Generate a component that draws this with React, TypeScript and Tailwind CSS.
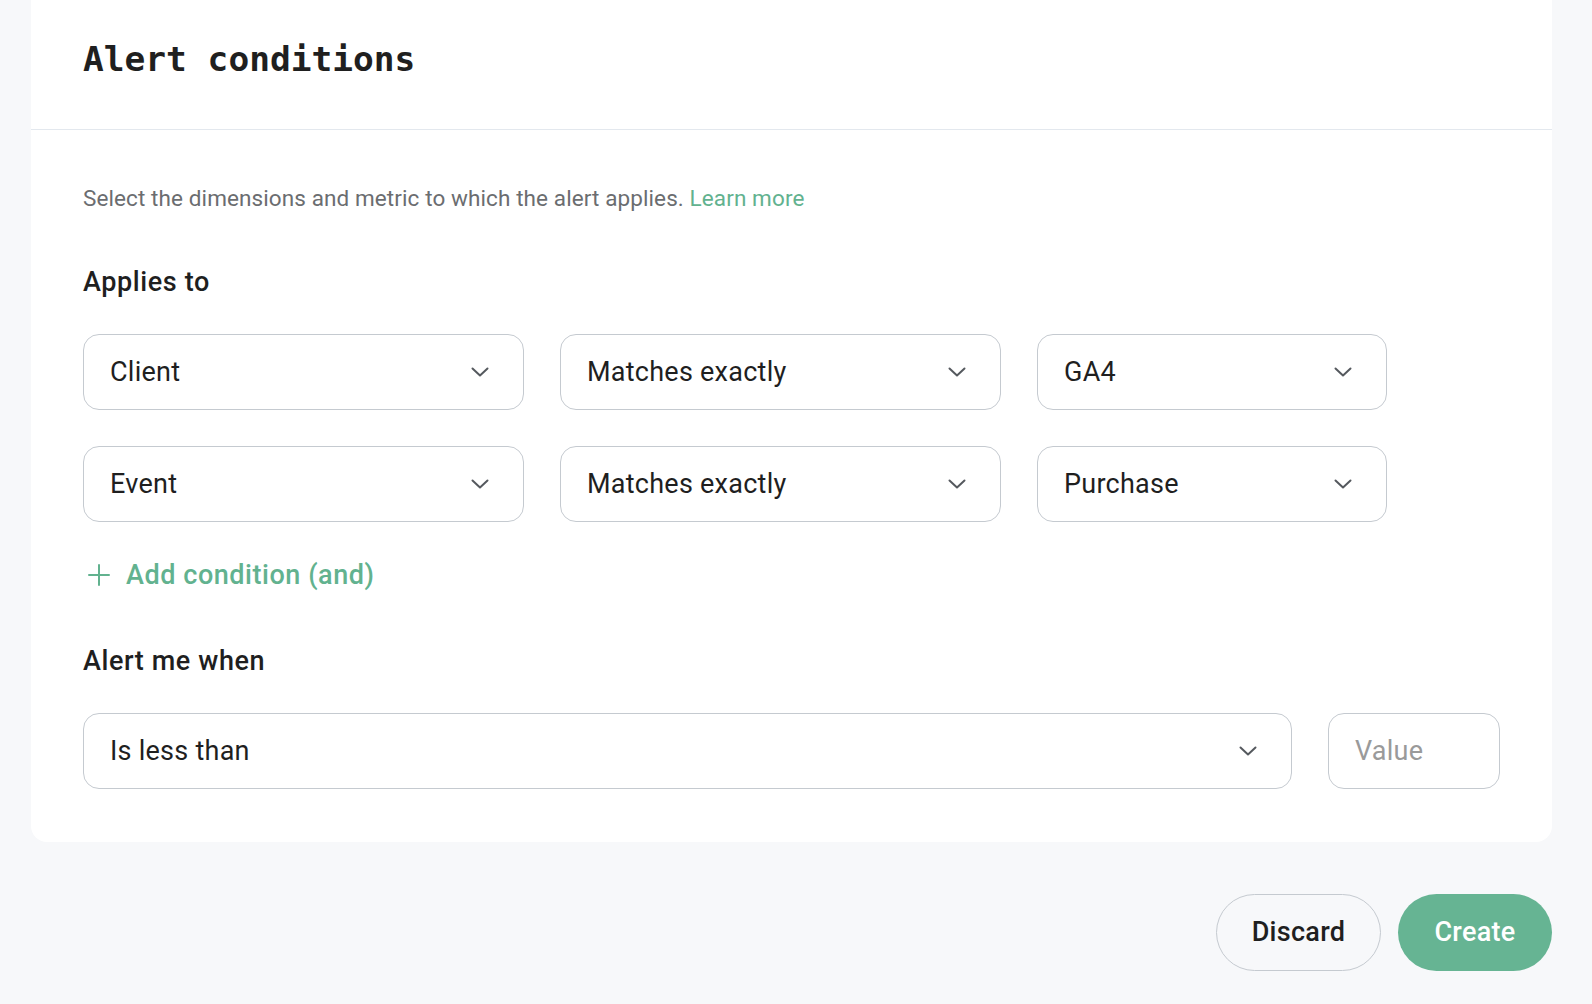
import { useState } from "react"

interface SelectBoxProps {
  value: string
  className?: string
}

// chevron used by every dropdown
function Chevron() {
  return (
    <svg width="18" height="10" viewBox="0 0 18 10" fill="none" className="shrink-0">
      <polyline points="1.5,1.5 9,8.5 16.5,1.5" stroke="#55595e" strokeWidth="2" strokeLinecap="round" strokeLinejoin="round" />
    </svg>
  )
}

function SelectBox({ value, className = "" }: SelectBoxProps) {
  return (
    <button
      type="button"
      className={`h-[76px] flex items-center justify-between pl-[26px] pr-[34px] bg-white border-[1.5px] border-[#c5cad0] rounded-[16px] text-[27px] tracking-[0.25px] text-[#1f1f1f] text-left ${className}`}
    >
      <span>{value}</span>
      <Chevron />
    </button>
  )
}

export default function App() {
  const [amount, setAmount] = useState("")

  const conditions = [
    { field: "Client", op: "Matches exactly", value: "GA4" },
    { field: "Event", op: "Matches exactly", value: "Purchase" }
  ]

  return (
    <div
      className="min-h-screen w-full bg-[#f7f8fa] pl-[31px] pr-[40px]"
      style={{ fontFamily: "Roboto, 'Noto Sans', sans-serif" }}
    >
      {/* Card */}
      <div className="bg-white rounded-b-[16px]">
        <div className="h-[130px] border-b-[1.5px] border-[#e3e8ee] px-[52px] pt-[40px]">
          <h1
            className="text-[34.5px] leading-[38px] font-bold text-[#1f1f1f]"
            style={{ fontFamily: "'DejaVu Sans Mono', 'Liberation Mono', monospace" }}
          >
            Alert conditions
          </h1>
        </div>

        <div className="px-[52px] pt-[54px] pb-[53px]">
          <p className="text-[22.5px] leading-[28px] tracking-[0.1px] text-[#6b6d70]">
            Select the dimensions and metric to which the alert applies.{" "}
            <a className="text-[#62b28f]">Learn more</a>
          </p>

          <h2 className="mt-[54px] text-[27px] leading-[32px] font-medium tracking-[0.6px] text-[#1f1f1f]">Applies to</h2>

          <div className="mt-[36px] flex flex-col gap-[36px]">
            {conditions.map((c) => (
              <div key={c.field} className="flex gap-[36px]">
                <SelectBox value={c.field} className="w-[441px]" />
                <SelectBox value={c.op} className="w-[441px]" />
                <SelectBox value={c.value} className="w-[350px]" />
              </div>
            ))}
          </div>

          <button type="button" className="mt-[37px] flex items-center gap-[16px] pl-[5px] text-[27px] leading-[32px] font-medium tracking-[0.55px] text-[#62b28f]">
            <svg width="22" height="22" viewBox="0 0 22 22" fill="none">
              <path d="M11 1v20M1 11h20" stroke="#62b28f" strokeWidth="2" strokeLinecap="round" />
            </svg>
            Add condition (and)
          </button>

          <h2 className="mt-[54px] text-[27px] leading-[32px] font-medium tracking-[0.6px] text-[#1f1f1f]">Alert me when</h2>

          <div className="mt-[36px] flex gap-[36px]">
            <SelectBox value="Is less than" className="flex-1" />
            <input
              value={amount}
              onChange={(e) => setAmount(e.target.value)}
              placeholder="Value"
              className="w-[172px] h-[76px] px-[26px] border-[1.5px] border-[#c5cad0] rounded-[16px] text-[27px] tracking-[0.25px] text-[#1f1f1f] placeholder:text-[#9a9a9a] outline-none"
            />
          </div>
        </div>
      </div>

      {/* Footer actions */}
      <div className="flex justify-end gap-[17px] pt-[52px]">
        <button
          type="button"
          className="w-[165px] h-[77px] rounded-full border-[1.5px] border-[#c5cad0] text-[27px] font-medium tracking-[0.3px] text-[#1f1f1f]"
        >
          Discard
        </button>
        <button
          type="button"
          className="w-[154px] h-[77px] rounded-full bg-[#66b493] text-[27px] font-medium tracking-[0.3px] text-white"
        >
          Create
        </button>
      </div>
    </div>
  )
}
